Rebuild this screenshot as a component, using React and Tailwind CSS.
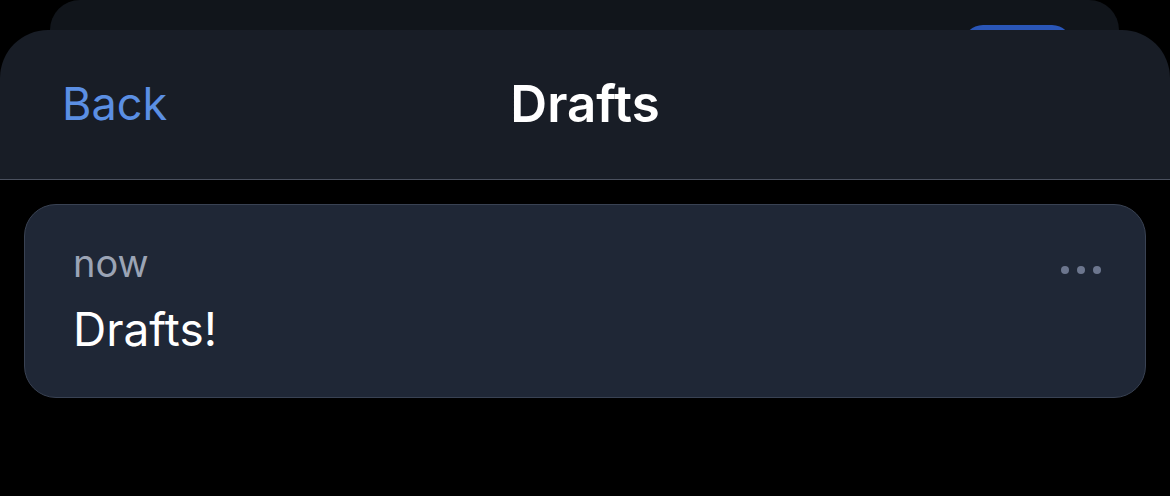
export default function App() {
  return (
    <div className="w-full h-[496px] bg-black overflow-hidden font-['Inter',sans-serif]">
      {/* sheet underneath */}
      <div className="relative mx-[50px] w-[1069px] h-[30px] overflow-hidden rounded-t-[40px] bg-[#11151b]">
        <div className="absolute top-[25px] left-[913px] w-[109px] h-[40px] rounded-full bg-[#2a56b8]"></div>
      </div>

      {/* top sheet header */}
      <div className="h-[150px] rounded-t-[48px] bg-[#181d26] border-b border-[#4a505e] grid grid-cols-[1fr_auto_1fr] items-center pl-[62px] pb-[2px]">
        <button type="button" className="justify-self-start text-[45px] leading-[52px] text-[#5b8fe3]">
          Back
        </button>
        <h1 className="text-[51px] leading-[56px] font-semibold text-white -ml-[62px]">Drafts</h1>
        <div></div>
      </div>

      {/* draft card */}
      <div className="mx-[24px] mt-[24px] h-[194px] rounded-[32px] bg-[#1f2736] border border-[#394253] pl-[48px] pr-[44px] pt-[36px]">
        <div className="flex items-start justify-between">
          <span className="text-[38px] leading-[44px] text-[#9ba4b5]">now</span>
          <div className="flex gap-[8px] mt-[25px]">
            <span className="w-[8px] h-[8px] rounded-full bg-[#6c768e]"></span>
            <span className="w-[8px] h-[8px] rounded-full bg-[#6c768e]"></span>
            <span className="w-[8px] h-[8px] rounded-full bg-[#6c768e]"></span>
          </div>
        </div>
        <p className="mt-[18px] text-[46px] leading-[52px] text-white">Drafts!</p>
      </div>
    </div>
  );
}
